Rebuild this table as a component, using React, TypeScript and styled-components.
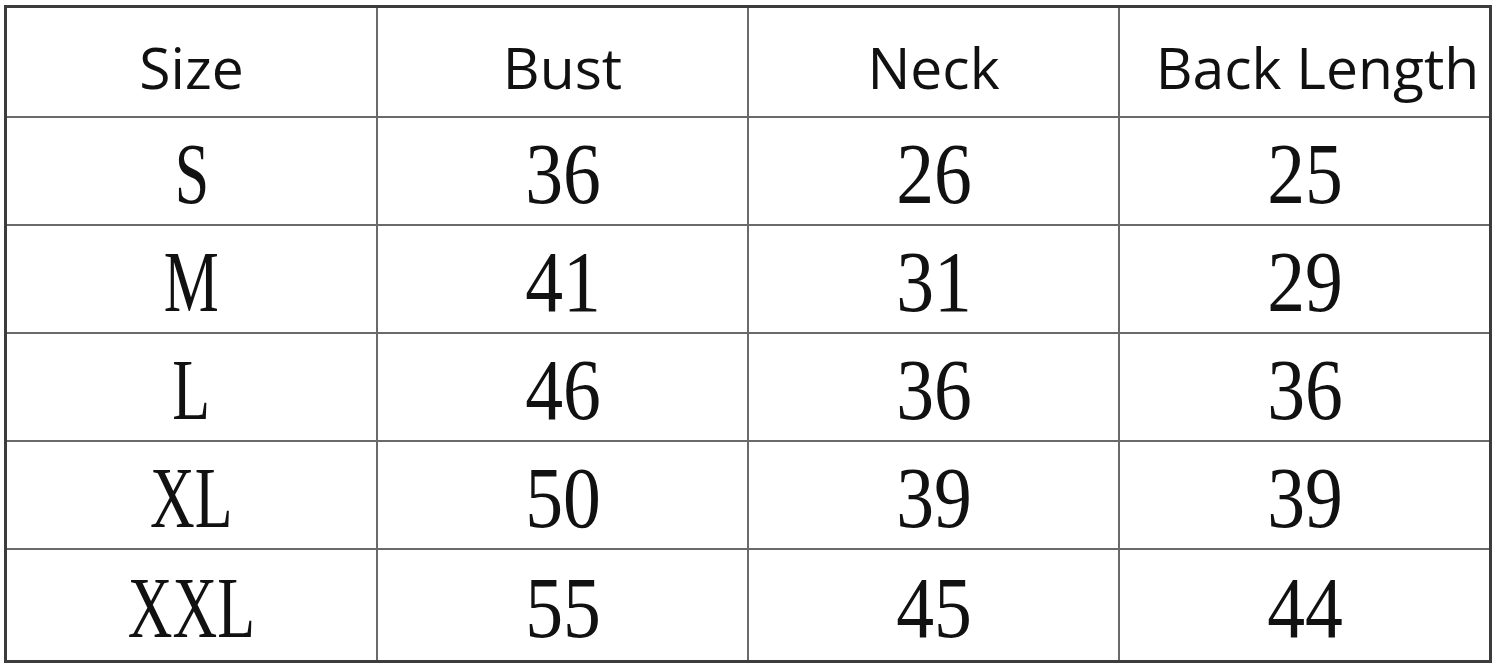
import React from 'react';
import styled, { createGlobalStyle } from 'styled-components';

const GlobalStyle = createGlobalStyle`
  html, body {
    margin: 0;
    padding: 0;
    background: #ffffff;
  }
`;

const Page = styled.div`
  width: 1500px;
  height: 671px;
  padding: 5px 0 0 4px;
  box-sizing: border-box;
  background: #ffffff;
`;

const Grid = styled.div`
  display: grid;
  grid-template-columns: repeat(4, 1fr);
  grid-template-rows: 108px repeat(4, 106px) 110px;
  gap: 2px;
  width: 1488px;
  box-sizing: border-box;
  border: 3px solid #3c3c3c;
  background: #6a6a6a;
`;

const Cell = styled.div<{ $head?: boolean }>`
  display: flex;
  align-items: center;
  justify-content: center;
  background: #ffffff;
  color: #111111;
  padding-top: ${({ $head }) => ($head ? '10px' : '6px')};
  box-sizing: border-box;
  overflow: visible;
  white-space: nowrap;
`;

const HeadText = styled.span`
  font-family: 'Open Sans', 'Noto Sans', sans-serif;
  font-size: 57px;
  line-height: 1;
`;

const ValueText = styled.span<{ $narrow?: boolean }>`
  display: inline-block;
  font-family: 'Liberation Serif', 'Times New Roman', serif;
  font-size: 86px;
  line-height: 1;
  transform: scaleX(${({ $narrow }) => ($narrow ? 0.72 : 0.88)});
`;

const headers = ['Size', 'Bust', 'Neck', 'Back Length'];

const rows: string[][] = [
  ['S', '36', '26', '25'],
  ['M', '41', '31', '29'],
  ['L', '46', '36', '36'],
  ['XL', '50', '39', '39'],
  ['XXL', '55', '45', '44'],
];

export default function App() {
  return (
    <>
      <GlobalStyle />
      <Page>
        <Grid>
          {headers.map((h) => (
            <Cell $head key={h}>
              <HeadText style={h === 'Back Length' ? { marginLeft: 26 } : undefined}>{h}</HeadText>
            </Cell>
          ))}
          {rows.map((row) =>
            row.map((v, i) => (
              <Cell key={row[0] + i}>
                <ValueText $narrow={i === 0}>{v}</ValueText>
              </Cell>
            ))
          )}
        </Grid>
      </Page>
    </>
  );
}
